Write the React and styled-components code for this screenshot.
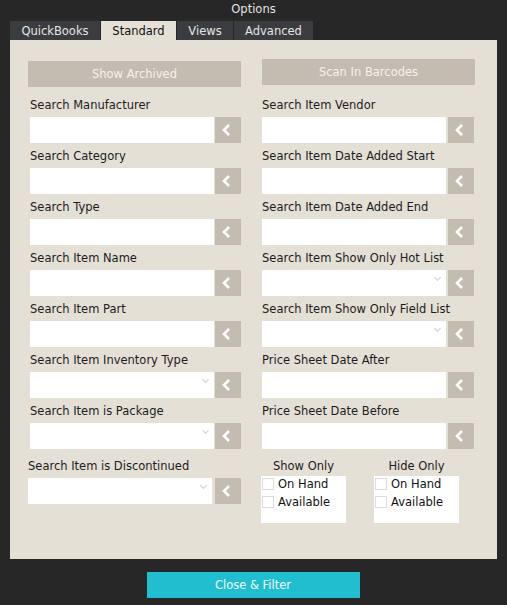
import React from 'react';
import styled, { createGlobalStyle } from 'styled-components';

const GlobalStyle = createGlobalStyle`
    html, body {
        margin: 0;
        padding: 0;
        background: #272727;
    }
    * {
        box-sizing: border-box;
    }
`;

const leftFields = [
    { label: 'Search Manufacturer' },
    { label: 'Search Category' },
    { label: 'Search Type' },
    { label: 'Search Item Name' },
    { label: 'Search Item Part' },
    { label: 'Search Item Inventory Type', select: true },
    { label: 'Search Item is Package', select: true },
];

const rightFields = [
    { label: 'Search Item Vendor' },
    { label: 'Search Item Date Added Start' },
    { label: 'Search Item Date Added End' },
    { label: 'Search Item Show Only Hot List', select: true },
    { label: 'Search Item Show Only Field List', select: true },
    { label: 'Price Sheet Date After' },
    { label: 'Price Sheet Date Before' },
];

const tabs = [
    { name: 'QuickBooks', width: 90 },
    { name: 'Standard', width: 75 },
    { name: 'Views', width: 56 },
    { name: 'Advanced', width: 79 },
];

const Arrow = () => (
    <svg width="10" height="12" viewBox="0 0 10 12">
        <polyline points="8,1 3,6 8,11" fill="none" stroke="#fff" strokeWidth="2.6" />
    </svg>
);

const Field = ({ label, select, inset, gap, drop }) => (
    <FieldBox inset={inset} drop={drop}>
        <Label>{label}</Label>
        <InputRow gap={gap}>
            <Input>{select && <Caret />}</Input>
            <ArrowButton><Arrow /></ArrowButton>
        </InputRow>
    </FieldBox>
);

const CheckGroup = ({ title }) => (
    <Group>
        <GroupTitle>{title}</GroupTitle>
        <CheckList>
            <CheckRow><Box />On Hand</CheckRow>
            <CheckRow><Box />Available</CheckRow>
        </CheckList>
    </Group>
);

export default function App() {
    return (
        <Window>
            <GlobalStyle />
            <Title>Options</Title>
            <TabBar>
                {tabs.map(t => (
                    <Tab key={t.name} width={t.width} active={t.name === 'Standard'}>{t.name}</Tab>
                ))}
            </TabBar>
            <Panel>
                <Column>
                    <WideButton lift={0}>Show Archived</WideButton>
                    {leftFields.map(f => (
                        <Field key={f.label} {...f} inset={2} gap={1} />
                    ))}
                    <Field label="Search Item is Discontinued" select inset={0} gap={3} drop={4} />
                </Column>
                <Column>
                    <WideButton lift={2}>Scan In Barcodes</WideButton>
                    {rightFields.map(f => (
                        <Field key={f.label} {...f} inset={0} gap={2} />
                    ))}
                    <Groups>
                        <CheckGroup title="Show Only" />
                        <CheckGroup title="Hide Only" />
                    </Groups>
                </Column>
            </Panel>
            <Footer>
                <CloseButton>Close &amp; Filter</CloseButton>
            </Footer>
        </Window>
    );
}

const Window = styled.div`
    width: 507px;
    height: 605px;
    background: #272727;
    display: flex;
    flex-direction: column;
    font-family: "DejaVu Sans", Verdana, sans-serif;
    font-size: 11.5px;
    overflow: hidden;
`;

const Title = styled.div`
    height: 21px;
    line-height: 18px;
    text-align: center;
    color: #e4e4e4;
`;

const TabBar = styled.div`
    display: flex;
    gap: 1px;
    padding-left: 10px;
    height: 19px;
`;

const Tab = styled.div`
    width: ${p => p.width}px;
    height: 19px;
    line-height: 20px;
    text-align: center;
    background: ${p => (p.active ? '#e4e0d6' : '#3b3c40')};
    color: ${p => (p.active ? '#111' : '#e6e6e6')};
`;

const Panel = styled.div`
    margin: 0 10px;
    height: 519px;
    background: #e4e0d6;
    padding: 21px 22px 0 18px;
    display: grid;
    grid-template-columns: 213px 213px;
    column-gap: 21px;
    align-content: start;
`;

const Column = styled.div`
    display: flex;
    flex-direction: column;
`;

const WideButton = styled.div`
    height: 26px;
    line-height: 27px;
    margin-top: ${p => -p.lift}px;
    margin-bottom: ${p => 5 + p.lift}px;
    background: #c4bcb0;
    color: #f4f2ee;
    text-align: center;
`;

const FieldBox = styled.div`
    display: flex;
    flex-direction: column;
    padding-left: ${p => p.inset}px;
    margin-top: ${p => p.drop || 0}px;
`;

const Label = styled.div`
    height: 25px;
    line-height: 26px;
    color: #1c1c1c;
    white-space: nowrap;
`;

const InputRow = styled.div`
    display: flex;
    gap: ${p => p.gap}px;
    height: 26px;
`;

const Input = styled.div`
    position: relative;
    width: 184px;
    height: 26px;
    background: #fff;
`;

const Caret = styled.span`
    position: absolute;
    right: 6px;
    top: 5px;
    width: 5px;
    height: 5px;
    border-right: 1px solid #cfcfcf;
    border-bottom: 1px solid #cfcfcf;
    transform: rotate(45deg);
`;

const ArrowButton = styled.div`
    width: 26px;
    height: 26px;
    background: #c4bcb0;
    display: flex;
    align-items: center;
    justify-content: center;
    padding-right: 5px;
`;

const Groups = styled.div`
    display: flex;
    gap: 28px;
    margin: 10px 0 0 -1px;
`;

const Group = styled.div`
    display: flex;
    flex-direction: column;
    width: 85px;
`;

const GroupTitle = styled.div`
    height: 17px;
    line-height: 15px;
    text-align: center;
    color: #1c1c1c;
`;

const CheckList = styled.div`
    height: 47px;
    background: #fff;
    padding: 2px 0 0 1px;
    display: flex;
    flex-direction: column;
    gap: 6px;
`;

const CheckRow = styled.div`
    display: flex;
    align-items: center;
    gap: 4px;
    height: 12px;
    color: #111;
`;

const Box = styled.span`
    width: 12px;
    height: 12px;
    border: 1px solid #dcdcdc;
    background: #fff;
`;

const Footer = styled.div`
    display: flex;
    justify-content: center;
    padding-top: 13px;
    padding-right: 1px;
`;

const CloseButton = styled.div`
    width: 213px;
    height: 26px;
    line-height: 27px;
    background: #20bece;
    color: #f2fbfc;
    text-align: center;
`;
